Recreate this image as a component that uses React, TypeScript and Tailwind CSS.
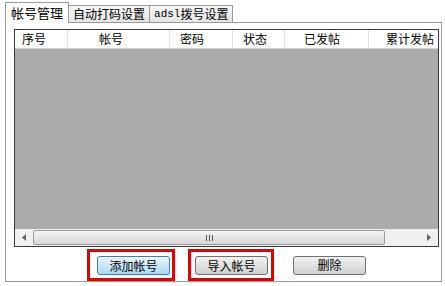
import React from "react";

const font = { fontFamily: '"SimSun", "Noto Sans CJK SC", sans-serif' };

const columns = [
  { label: "序号", w: "w-[53px] shrink-0", pad: "pl-[7px]" },
  { label: "帐号", w: "w-[102px] shrink-0", pad: "pl-[31px]" },
  { label: "密码", w: "w-[63px] shrink-0", pad: "pl-[10px]" },
  { label: "状态", w: "w-[52px] shrink-0", pad: "pl-[10px]" },
  { label: "已发帖", w: "w-[84px] shrink-0", pad: "pl-[19px]" },
  { label: "累计发帖", w: "flex-1 overflow-hidden", pad: "pl-[17px]" },
];

function Tab({ label, active }: { label: React.ReactNode; active?: boolean }) {
  if (active) {
    return (
      <div className="relative z-10 -mb-px flex h-[21px] items-center border border-b-0 border-[#9a9a9a] bg-white px-[5px] text-[13px] text-black">
        {label}
      </div>
    );
  }
  return (
    <div className="-ml-px mt-[3px] flex h-[17px] items-center border border-b-0 border-[#9a9a9a] bg-gradient-to-b from-[#f7f7f7] to-[#e4e4e4] px-[4px] text-[12px] text-black">
      {label}
    </div>
  );
}

function Button({ label, focused }: { label: string; focused?: boolean }) {
  return (
    <div
      className={`flex h-[19px] w-[73px] items-center justify-center rounded-[3px] border text-[12px] text-black ${
        focused
          ? "border-[#3c7fb1] bg-gradient-to-b from-[#eaf6fd] to-[#a7d9f5]"
          : "border-[#707070] bg-gradient-to-b from-[#f2f2f2] to-[#d0d0d0]"
      }`}
    >
      {label}
    </div>
  );
}

export default function App() {
  return (
    <div className="h-[286px] w-[445px] bg-white pt-[2px]" style={font}>
      <div className="flex pl-[5px]">
        <Tab label="帐号管理" active />
        <Tab label="自动打码设置" />
        <Tab
          label={
            <>
              <span className="text-[11px]" style={{ fontFamily: '"Liberation Mono", monospace' }}>
                adsl
              </span>
              <span>拨号设置</span>
            </>
          }
        />
      </div>
      <div className="ml-[5px] flex h-[260px] w-[437px] flex-col border border-[#9a9a9a] bg-white pl-[8px] pr-[2px] pt-[6px]">
        <div className="flex h-[219px] flex-col border border-[#3a3a3a] bg-[#ababab]">
          <div className="flex h-[19px] border-b border-[#d5d5d5] bg-white text-[12px] text-black">
            {columns.map((c, i) => (
              <div
                key={c.label}
                className={`flex items-center whitespace-nowrap ${c.w} ${c.pad} ${
                  i < columns.length - 1 ? "border-r border-[#e3e3e3]" : ""
                }`}
              >
                {c.label}
              </div>
            ))}
          </div>
          <div className="flex-1" />
          <div className="flex h-[17px] items-center bg-[#f0f0f0]">
            <div className="flex w-[18px] justify-center">
              <svg width="4" height="7" viewBox="0 0 4 7">
                <path d="M4 0 L0 3.5 L4 7 Z" fill="#606060" />
              </svg>
            </div>
            <div className="flex h-[15px] w-[352px] items-center justify-center rounded-[2px] border border-[#9c9c9c] bg-gradient-to-b from-[#f4f4f4] to-[#d8d8d8]">
              <svg width="7" height="6" viewBox="0 0 7 6">
                <path d="M0.5 0 V6 M3.5 0 V6 M6.5 0 V6" stroke="#555" strokeWidth="1" />
              </svg>
            </div>
            <div className="flex-1" />
            <div className="flex w-[18px] justify-center">
              <svg width="4" height="7" viewBox="0 0 4 7">
                <path d="M0 0 L4 3.5 L0 7 Z" fill="#606060" />
              </svg>
            </div>
          </div>
        </div>
        <div className="mt-[2px] flex items-center pl-[73px]">
          <div className="border-[3px] border-[#e00000] pb-[3px] pl-[7px] pr-[2px] pt-[4px]">
            <Button label="添加帐号" focused />
          </div>
          <div className="ml-[13px] border-[3px] border-[#e00000] pb-[3px] pl-[4px] pr-[3px] pt-[4px]">
            <Button label="导入帐号" />
          </div>
          <div className="ml-[19px]">
            <Button label="删除" />
          </div>
        </div>
      </div>
    </div>
  );
}
